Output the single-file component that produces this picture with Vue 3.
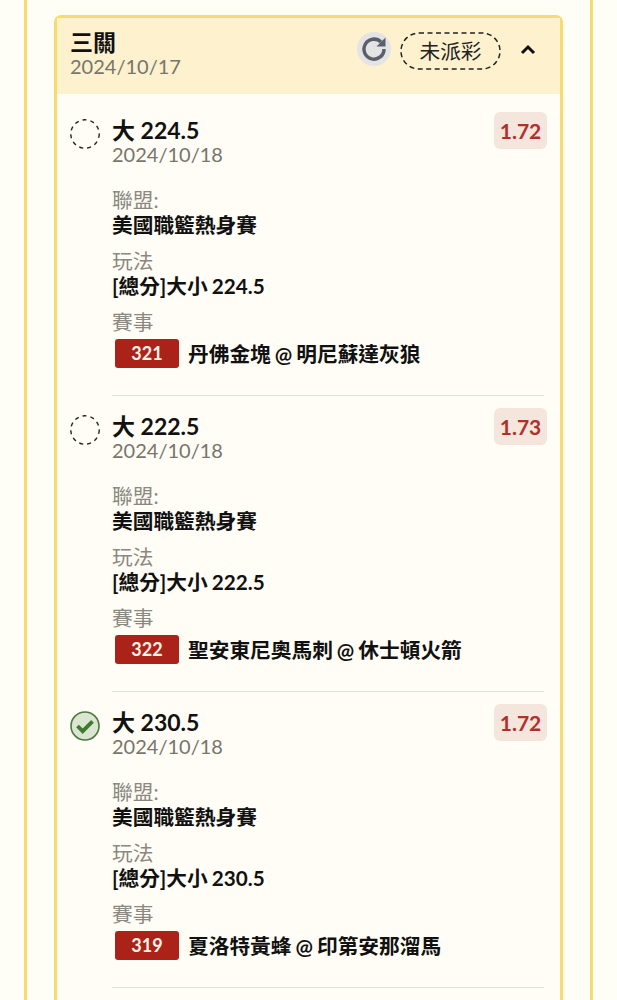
<template>
  <div class="page">
    <div class="column">
      <div class="parlay">
        <div class="parlay-header">
          <div class="parlay-title">
            <div class="parlay-name">三關</div>
            <div class="parlay-date">2024/10/17</div>
          </div>
          <button class="refresh">
            <svg width="26" height="26" viewBox="0 0 26 26">
              <path d="M20 6A10 10 0 1 0 23 13" fill="none" stroke="#5b5f6b" stroke-width="3.5" />
              <path d="M24.5 1.5v9h-9z" fill="#5b5f6b" />
            </svg>
          </button>
          <span class="status">
            未派彩
            <svg class="status-ring" width="101" height="38" viewBox="0 0 101 38">
              <rect x="1" y="1" width="99" height="36" rx="18" fill="none" stroke="#222" stroke-width="1.5" stroke-dasharray="5 3.5" />
            </svg>
          </span>
          <svg class="chevron" width="16" height="16" viewBox="0 0 16 16">
            <path d="M2 12l6-6 6 6" fill="none" stroke="#111" stroke-width="3" />
          </svg>
        </div>

        <div class="legs">
          <div v-for="leg in legs" :key="leg.code" class="leg">
            <div class="leg-mark">
              <svg v-if="leg.won" width="30" height="30" viewBox="0 0 30 30">
                <circle cx="15" cy="15" r="14" fill="#dbe6d2" stroke="#4b7a3e" stroke-width="1.6" />
                <path d="M7.5 15l5.2 5.2L22.5 10.4" fill="none" stroke="#3f7a2e" stroke-width="3.8" />
              </svg>
              <svg v-else width="30" height="30" viewBox="0 0 30 30">
                <circle cx="15" cy="15" r="14.2" fill="none" stroke="#222" stroke-width="1.4" stroke-dasharray="4 4" />
              </svg>
            </div>
            <div class="leg-body">
              <div class="leg-top">
                <div>
                  <div class="leg-pick">{{ leg.pick }}</div>
                  <div class="leg-date">2024/10/18</div>
                </div>
                <span class="odds">{{ leg.odds }}</span>
              </div>
              <div class="field first">
                <div class="field-label">聯盟:</div>
                <div class="field-value">美國職籃熱身賽</div>
              </div>
              <div class="field">
                <div class="field-label">玩法</div>
                <div class="field-value">{{ leg.market }}</div>
              </div>
              <div class="field">
                <div class="field-label">賽事</div>
                <div class="match">
                  <span class="code">{{ leg.code }}</span>
                  <span class="match-name">{{ leg.match }}</span>
                </div>
              </div>
            </div>
          </div>
        </div>
      </div>
    </div>
  </div>
</template>

<script setup>
const legs = [
  { code: 321, pick: '大 224.5', odds: '1.72', market: '[總分]大小 224.5', match: '丹佛金塊 @ 明尼蘇達灰狼', won: false },
  { code: 322, pick: '大 222.5', odds: '1.73', market: '[總分]大小 222.5', match: '聖安東尼奧馬刺 @ 休士頓火箭', won: false },
  { code: 319, pick: '大 230.5', odds: '1.72', market: '[總分]大小 230.5', match: '夏洛特黃蜂 @ 印第安那溜馬', won: true }
]
</script>

<style>
html, body {
  margin: 0;
  overflow: hidden;
  background: #fffef6;
}
</style>

<style scoped>
.page {
  height: 1000px;
  overflow: hidden;
  padding: 0 24px;
  font-family: Lato, "Noto Sans CJK TC", sans-serif;
  color: #111;
}

.column {
  height: 100%;
  padding: 15px 27px 0;
  border-left: 3px solid #f6dc6c;
  border-right: 3px solid #f6dc6c;
}

.parlay {
  border: 3px solid #f6dc6c;
  border-radius: 7px;
  background: #fffdf5;
  padding-bottom: 40px;
}

.parlay-header {
  height: 76px;
  display: flex;
  align-items: flex-start;
  padding: 0 14px 0 13px;
  background: #fdf1ce;
}

.parlay-title {
  flex: 1;
  padding-top: 10px;
}

.parlay-name {
  font-size: 23px;
  line-height: 28px;
  font-weight: 700;
}

.parlay-date {
  font-size: 20px;
  line-height: 20px;
  color: #77756c;
}

.refresh {
  width: 34px;
  height: 34px;
  margin-top: 14px;
  padding: 0;
  border: none;
  border-radius: 50%;
  background: #e3e4e3;
  display: flex;
  align-items: center;
  justify-content: center;
}

.status {
  position: relative;
  margin: 14px 0 0 9px;
  width: 101px;
  height: 38px;
  text-align: center;
  font-size: 20.7px;
  line-height: 38px;
  color: #222;
}

.status-ring {
  position: absolute;
  left: 0;
  top: 0;
}

.chevron {
  margin: 23px 10px 0 19px;
}

.legs {
  padding: 6px 16px 0 13px;
}

.leg {
  display: flex;
  gap: 12px;
  padding-top: 15px;
}

.leg-mark {
  width: 30px;
  height: 30px;
  margin-top: 4px;
  flex: none;
}

.leg-body {
  flex: 1;
  height: 280px;
  border-bottom: 1px solid #e3e2da;
}

.leg-top {
  display: flex;
  justify-content: space-between;
  align-items: flex-start;
}

.leg-pick {
  font-size: 23px;
  line-height: 30px;
  font-weight: 700;
}

.leg-date {
  font-size: 20px;
  line-height: 18px;
  color: #77756c;
}

.odds {
  width: 53px;
  height: 37px;
  margin: -3px -3px 0 0;
  border-radius: 6px;
  background: #f4e5dd;
  color: #b1302b;
  font-size: 21px;
  font-weight: 700;
  line-height: 37px;
  text-align: center;
}

.field {
  margin-top: 11px;
}

.field.first {
  margin-top: 24px;
}

.field-label {
  font-size: 20.7px;
  line-height: 26px;
  color: #8a8880;
}

.field-value {
  font-size: 20.7px;
  line-height: 24px;
  font-weight: 700;
  word-spacing: -1px;
}

.match {
  display: flex;
  align-items: center;
  gap: 9px;
  padding-left: 3px;
  margin-top: 3px;
}

.code {
  width: 64px;
  height: 29px;
  border-radius: 3px;
  background: #ab2318;
  color: #fff3ea;
  font-size: 18px;
  font-weight: 700;
  line-height: 29px;
  text-align: center;
}

.match-name {
  font-size: 20.7px;
  font-weight: 700;
  word-spacing: -1px;
}
</style>
